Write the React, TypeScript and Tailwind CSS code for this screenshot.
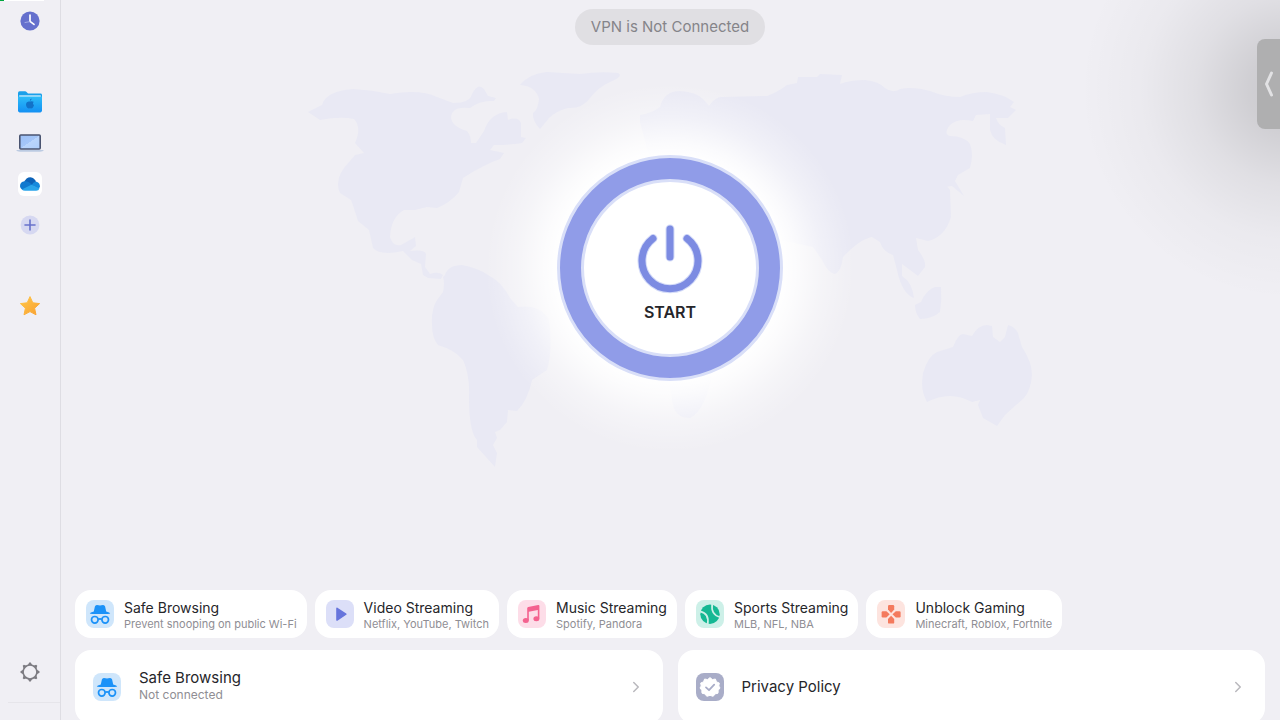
import { useState } from "react";
import type { ReactNode } from "react";
import { ChevronRight } from "lucide-react";

type Shortcut = {
  title: string;
  detail: string;
  tile: string;
  icon: ReactNode;
};

function SpyIcon() {
  return (
    <svg viewBox="0 0 28 28" className="size-7" fill="none" aria-hidden="true">
      <path
        d="M7.8 11.6 L8.9 6.6 Q9.4 5 11 5.1 Q12.6 5.5 14 5.5 Q15.4 5.5 17 5.1 Q18.6 5 19.1 6.6 L20.2 11.6 Q24 12.6 24.2 13.4 Q24 14 14 14 Q4 14 3.8 13.4 Q4 12.6 7.8 11.6 Z"
        fill="#1b92f8"
      />
      <circle cx="8.8" cy="19.8" r="3.3" stroke="#1b92f8" strokeWidth="1.7" />
      <circle cx="19.2" cy="19.8" r="3.3" stroke="#1b92f8" strokeWidth="1.7" />
      <path d="M12 19.4 Q14 18.4 16 19.4" stroke="#1b92f8" strokeWidth="1.7" />
    </svg>
  );
}

function PlayIcon() {
  return (
    <svg viewBox="0 0 28 28" className="size-7" aria-hidden="true">
      <path d="M11 8.4 L19.8 14.2 L11 20 Z" fill="#6674dc" stroke="#6674dc" strokeWidth="1.6" strokeLinejoin="round" />
    </svg>
  );
}

function MusicIcon() {
  return (
    <svg viewBox="0 0 28 28" className="size-7" fill="#f4628f" aria-hidden="true">
      <path d="M9.2 8.2 Q9.2 7.2 10.2 6.9 L20.2 5.1 Q21.4 4.9 21.4 6 L21.4 18.5 L19.8 18.5 L19.8 10 L10.8 11.7 L10.8 20.5 L9.2 20.5 Z" />
      <ellipse cx="7.8" cy="20.6" rx="3" ry="2.5" />
      <ellipse cx="18.4" cy="18.7" rx="3" ry="2.5" />
    </svg>
  );
}

function BallIcon() {
  return (
    <svg viewBox="0 0 28 28" className="size-7" fill="none" aria-hidden="true">
      <circle cx="14" cy="14.2" r="9.7" fill="#14b893" />
      <path d="M4 11.4 Q13.6 13.4 11.6 24.4" stroke="#cdf0e8" strokeWidth="1.7" />
      <path d="M16.2 4 Q14.6 14.6 24 17.2" stroke="#cdf0e8" strokeWidth="1.7" />
    </svg>
  );
}

function GamepadIcon() {
  return (
    <svg viewBox="0 0 28 28" className="size-7" fill="#f47a5d" aria-hidden="true">
      <path d="M11 6.2 Q11 5 12.2 5 L16 5 Q17.2 5 17.2 6.2 L17.2 9.6 L14.1 12.9 L11 9.6 Z" />
      <path d="M11 22.4 Q11 23.6 12.2 23.6 L16 23.6 Q17.2 23.6 17.2 22.4 L17.2 19 L14.1 15.7 L11 19 Z" />
      <path d="M5.8 11.2 Q4.6 11.2 4.6 12.4 L4.6 16.2 Q4.6 17.4 5.8 17.4 L9.4 17.4 L12.7 14.3 L9.4 11.2 Z" />
      <path d="M22.4 11.2 Q23.6 11.2 23.6 12.4 L23.6 16.2 Q23.6 17.4 22.4 17.4 L18.8 17.4 L15.5 14.3 L18.8 11.2 Z" />
    </svg>
  );
}

function BadgeIcon() {
  return (
    <svg viewBox="0 0 28 28" className="size-7" fill="none" aria-hidden="true">
      <path
        d="M14 4.6 L16.4 6.6 L19.4 6 L20.5 8.9 L23.3 10 L22.8 13 L24 15 L22.2 17.2 L22 20.2 L19.1 20.9 L17.2 23.3 L14 22.4 L10.8 23.3 L8.9 20.9 L6 20.2 L5.8 17.2 L4 15 L5.2 13 L4.7 10 L7.5 8.9 L8.6 6 L11.6 6.6 Z"
        fill="#fff"
        stroke="#fff"
        strokeLinejoin="round"
      />
      <path d="M10 14.4 L13 17.2 L18.2 11.6" stroke="#a9adc8" strokeWidth="1.8" strokeLinecap="round" strokeLinejoin="round" />
    </svg>
  );
}

const SHORTCUTS: Shortcut[] = [
  { title: "Safe Browsing",    detail: "Prevent snooping on public Wi-Fi", tile: "bg-[#cfe6fb]", icon: <SpyIcon /> },
  { title: "Video Streaming",  detail: "Netflix, YouTube, Twitch",         tile: "bg-[#dcdff8]", icon: <PlayIcon /> },
  { title: "Music Streaming",  detail: "Spotify, Pandora",                 tile: "bg-[#fddde8]", icon: <MusicIcon /> },
  { title: "Sports Streaming", detail: "MLB, NFL, NBA",                    tile: "bg-[#cdf0e8]", icon: <BallIcon /> },
  { title: "Unblock Gaming",   detail: "Minecraft, Roblox, Fortnite",      tile: "bg-[#fde4df]", icon: <GamepadIcon /> },
];

function ClockIcon() {
  return (
    <svg viewBox="0 0 20 20" className="size-5" aria-hidden="true">
      <circle cx="10" cy="10" r="9.6" fill="#6570cd" />
      <path d="M10 4 V10.4 L14 13.4" fill="none" stroke="#fff" strokeWidth="1.7" strokeLinecap="round" strokeLinejoin="round" />
      <path d="M10 10.6 L4.6 11.6" stroke="#b0b7ec" strokeWidth="0.8" />
    </svg>
  );
}

function FolderIcon() {
  return (
    <svg viewBox="0 0 26 24" className="h-6 w-[26px]" aria-hidden="true">
      <defs>
        <linearGradient id="folder" x1="0" y1="0" x2="0" y2="1">
          <stop offset="0" stopColor="#2cbcf8" />
          <stop offset="1" stopColor="#1490f3" />
        </linearGradient>
      </defs>
      <path d="M1 3 Q1 1.2 2.6 1.2 L8 1.2 Q9 1.2 9.8 2.2 L11 3.6 L23.4 3.6 Q25 3.6 25 5 L25 9 L1 9 Z" fill="#1aa0ea" />
      <rect x="2.2" y="5.4" width="21.6" height="4" fill="#e4f5fe" />
      <path d="M1 6.6 H25 V20.6 Q25 22.4 23.4 22.4 H2.6 Q1 22.4 1 20.6 Z" fill="url(#folder)" />
      <path
        d="M13 11.6 Q14.8 10.8 16.6 11.8 Q15 13.6 17 15.6 Q15.8 18.6 14.2 18.6 Q13 18 11.8 18.6 Q9 17.6 9 14 Q9.4 10.8 13 11.6 Z M12.8 10.9 Q12.8 9 14.6 8.6 Q14.8 10.6 12.8 10.9 Z"
        fill="#1272c8"
      />
    </svg>
  );
}

function LaptopIcon() {
  return (
    <svg viewBox="0 0 28 20" className="h-5 w-7" aria-hidden="true">
      <defs>
        <linearGradient id="screen" x1="0" y1="0" x2="1" y2="1">
          <stop offset="0" stopColor="#9cc0f6" />
          <stop offset="0.5" stopColor="#a5c6f8" />
          <stop offset="0.5" stopColor="#bad5fb" />
          <stop offset="1" stopColor="#aecdfa" />
        </linearGradient>
      </defs>
      <rect x="3.8" y="2" width="20.4" height="14" rx="1" fill="url(#screen)" stroke="#4a5470" strokeWidth="1.6" />
      <path d="M0 17 H28 Q27 18.8 24 18.8 H4 Q1 18.8 0 17 Z" fill="#bccbe2" />
    </svg>
  );
}

function CloudIcon() {
  return (
    <svg viewBox="0 0 24 24" className="size-6 rounded-md bg-white" aria-hidden="true">
      <path d="M6 10.6 Q8 5.2 12.4 5.2 Q16.6 5.4 18.2 10.4 L13 15 Z" fill="#0c62b8" />
      <path d="M6.6 9.2 Q2 9.6 2 14.2 Q2.2 16.8 4.4 18 L15 13.4 Q10.4 8.8 6.6 9.2 Z" fill="#1079cf" />
      <path d="M13.6 13 Q16 9 18.6 9.8 Q22 10.8 22 15 L20 17 Z" fill="#1589dc" />
      <path d="M3.8 17.6 L13.4 12.8 L21.6 16.6 Q20.6 18.8 18.2 18.8 H7 Q5 18.8 3.8 17.6 Z" fill="#29a4ea" />
    </svg>
  );
}

function AddIcon() {
  return (
    <svg viewBox="0 0 20 20" className="size-5" aria-hidden="true">
      <circle cx="10" cy="10" r="9.4" fill="#d6d8f1" />
      <path d="M10 5 V15 M5 10 H15" stroke="#6872cb" strokeWidth="1.6" strokeLinecap="round" />
    </svg>
  );
}

function StarIcon() {
  return (
    <svg viewBox="0 0 22 22" className="size-[22px]" aria-hidden="true">
      <defs>
        <linearGradient id="star" x1="0" y1="0" x2="1" y2="1">
          <stop offset="0" stopColor="#ffc84a" />
          <stop offset="1" stopColor="#f9a030" />
        </linearGradient>
      </defs>
      <path
        d="M11 1.6 L13.8 7.8 L20.6 8.6 L15.6 13.2 L17 19.8 L11 16.6 L5 19.8 L6.4 13.2 L1.4 8.6 L8.2 7.8 Z"
        fill="url(#star)"
        stroke="url(#star)"
        strokeLinejoin="round"
      />
    </svg>
  );
}

function GearIcon() {
  return (
    <svg viewBox="0 0 20 20" className="size-5" fill="none" aria-hidden="true">
      <circle cx="10" cy="10" r="6.9" stroke="#7d7c82" strokeWidth="1.5" />
      {[0, 45, 90, 135, 180, 225, 270, 315].map(angle => (
        <path key={angle} d="M7.8 3.2 L9.2 0.5 H10.8 L12.2 3.2 Z" fill="#7d7c82" transform={`rotate(${angle} 10 10)`} />
      ))}
    </svg>
  );
}

function SideButton({ label, className = "", children }: { label: string; className?: string; children: ReactNode }) {
  return (
    <button type="button" aria-label={label} className={`flex h-[41px] w-full shrink-0 items-center justify-center ${className}`}>
      {children}
    </button>
  );
}

function Sidebar() {
  return (
    <nav className="flex w-[61px] shrink-0 flex-col border-r border-[#dedde3]">
      <SideButton label="Recents"><ClockIcon /></SideButton>
      <SideButton label="Files" className="mt-10"><FolderIcon /></SideButton>
      <SideButton label="Computer"><LaptopIcon /></SideButton>
      <SideButton label="OneDrive"><CloudIcon /></SideButton>
      <SideButton label="Add location"><AddIcon /></SideButton>
      <SideButton label="Favorites" className="mt-10"><StarIcon /></SideButton>
      <SideButton label="Settings" className="mt-auto"><GearIcon /></SideButton>
      <div className="mt-2.5 mb-[17px] ml-2 h-px shrink-0 bg-[#e6e5ea]" />
    </nav>
  );
}

function WorldMap() {
  return (
    <svg viewBox="290 68 760 400" className="w-[760px] max-w-full" fill="#e9e9f4" aria-hidden="true">
      {/* North and Central America */}
      <path d="M308 112 L322 105 Q326 91 353 89 Q372 90 390 94 Q420 89 437 97 L453 103 Q470 103 472 94 Q478 82 484 89 L488 96 L496 98 L494 101 Q480 100 470 108 Q452 106 451 117 Q451 126 467 131 Q471 136 471 143 L476 143 Q480 137 484 131 Q490 113 507 112 L508 120 Q518 116 521 123 L521 137 L526 138 L522 143 Q510 145 494 145 L490 150 L504 153 L500 159 Q485 164 463 178 L459 192 Q450 203 437 208 L427 207 L415 210 L404 210 Q391 217 390 237 Q393 247 401 245 Q410 240 415 237 L416 246 L410 251 Q425 249 426 254 L425 267 L430 274 Q438 271 443 275 L441 279 L428 278 L423 275 L421 264 L412 260 L403 251 Q380 256 373 248 L369 230 L358 221 Q354 208 351 200 L340 193 Q333 178 350 161 L355 155 L364 153 L355 143 Q362 128 354 119 Q340 116 320 120 Z" />
      {/* South America */}
      <path d="M445 275 Q448 265 462 265 Q478 268 488 275 Q502 282 510 298 L518 307 Q540 304 549 320 Q553 350 547 370 L532 380 Q528 400 517 411 L508 410 L507 422 L500 430 L495 432 L497 438 L493 445 L497 453 L495 467 L477 447 L477 440 Q469 432 469 397 Q470 375 463 360 Q455 350 438 345 Q432 338 432 325 Q431 310 437 300 L443 292 Q445 283 443 277 Z" />
      {/* Greenland */}
      <path d="M520 85 Q528 74 547 72 L580 74 Q600 71 618 73 Q624 76 610 82 Q597 88 590 98 Q582 109 568 108 Q556 111 549 118 L540 129 Q532 120 533 113 Q538 110 539 99 Q536 86 520 85 Z" />
      {/* Europe and Asia */}
      <path d="M640 122 L640 115 Q652 113 660 107 Q664 91 680 91 Q696 92 703 99 L709 106 Q715 97 722 97 L767 96 Q778 92 787 85 L797 83 L798 77 L817 77 L820 74 L842 75 L840 84 Q850 80 865 80 Q878 81 885 88 Q893 94 900 89 Q913 86 930 91 Q945 97 960 97 Q972 92 987 92 Q1003 94 1014 102 L1010 107 L1016 110 L1008 118 L996 118 Q998 125 1005 128 L1006 145 Q992 140 990 130 L990 114 L976 115 L973 121 Q958 118 950 125 Q943 134 950 136 Q964 136 970 144 Q974 154 970 168 L958 175 L955 181 L964 196 L952 186 L937 188 L931 183 L940 178 L950 190 L951 217 Q945 237 928 241 L916 238 L918 250 Q926 260 925 267 L918 276 L902 264 L902 276 Q912 282 914 298 Q902 294 897 270 L893 255 Q883 252 880 242 L872 237 Q860 239 843 257 Q841 272 835 274 Q828 273 822 260 L813 247 L780 240 L680 200 L640 200 L650 160 Z" />
      <path d="M915 305 L921 302 Q926 290 935 287 L941 287 Q942 300 940 312 Q932 319 920 319 Q915 313 915 305 Z" />
      {/* Africa */}
      <path d="M600 230 Q660 190 720 220 L760 290 Q735 330 713 370 Q706 410 690 418 Q676 418 673 405 L660 330 Q600 310 600 230 Z" />
      {/* Australia */}
      <path d="M922 383 L923 373 Q928 356 937 352 L953 347 Q958 334 963 334 L972 336 Q978 325 987 325 L992 326 L993 337 L1000 342 L1005 337 L1008 325 Q1018 328 1019 337 L1022 347 Q1032 362 1032 375 Q1031 390 1024 398 L1005 415 L997 426 L983 418 L978 405 L980 400 L972 402 Q950 390 927 402 Q922 393 922 383 Z" />
    </svg>
  );
}

function PowerIcon() {
  return (
    <svg viewBox="0 0 70 72" className="h-[72px] w-[70px]" fill="none" strokeLinecap="round" aria-hidden="true">
      <path d="M18 14.5 A28 28 0 1 0 52 14.5 M35 5 V33" stroke="#d5dcf8" strokeWidth="9" />
      <path d="M18 14.5 A28 28 0 1 0 52 14.5 M35 5 V33" stroke="#7c8be2" strokeWidth="7" />
    </svg>
  );
}

export default function App() {
  const [connected, setConnected] = useState(false);

  return (
    <div className="relative flex h-screen overflow-hidden bg-[#f0eff4] font-[Inter,sans-serif] text-[#26262a]">
      {/* Page load bar */}
      <div className="absolute top-0 left-0 h-px w-11 bg-white">
        <div className="h-full w-1 bg-green-600" />
      </div>

      <Sidebar />

      <main className="flex min-w-0 flex-1 flex-col pt-[9px] pr-px">
        <p className="self-center rounded-full bg-[#e0dfe3] px-4 py-1.5 text-[15px] leading-6 text-[#858489]">
          {connected ? "VPN is Connected" : "VPN is Not Connected"}
        </p>

        {/* Map, glow and power button share one cell */}
        <div className="mt-[23px] grid place-items-center *:col-start-1 *:row-start-1">
          <WorldMap />
          <div className="size-[370px] rounded-full bg-[radial-gradient(closest-side,#fff_60%,#ffffffcc_68%,#ffffff5c_82%,#ffffff1f_93%,#ffffff00_100%)]" />
          <button
            type="button"
            onClick={() => setConnected(v => !v)}
            className="size-[226px] rounded-full border-3 border-[#d9dff8] bg-[#909ce8] p-[21px]"
          >
            <span className="flex size-full flex-col items-center justify-center gap-1 rounded-full border-3 border-[#d9dff8] bg-white pt-3">
              <PowerIcon />
              <span className="text-base font-semibold">{connected ? "STOP" : "START"}</span>
            </span>
          </button>
        </div>

        <div className="-mb-1 mt-auto space-y-3 px-3.5">
          <div className="flex gap-2">
            {SHORTCUTS.map(s => (
              <button
                key={s.title}
                type="button"
                className="flex h-12 shrink-0 items-center gap-2.5 rounded-2xl bg-white pr-2.5 pl-[11px] text-left"
              >
                <span className={`rounded-lg ${s.tile}`}>{s.icon}</span>
                <span className="pt-0.5 whitespace-nowrap">
                  <span className="block text-sm leading-[18px]">{s.title}</span>
                  <span className="block text-[11px] leading-[14px] text-[#8f8e94]">{s.detail}</span>
                </span>
              </button>
            ))}
          </div>

          <div className="grid grid-cols-2 gap-[15px]">
            <button type="button" className="flex h-[74px] items-center gap-[18px] rounded-2xl bg-white px-[18px] text-left">
              <span className="rounded-lg bg-[#cfe6fb]"><SpyIcon /></span>
              <span className="flex-1 pb-1">
                <span className="block text-[15px] leading-5">Safe Browsing</span>
                <span className="block text-xs leading-[14px] text-[#8f8e94]">Not connected</span>
              </span>
              <ChevronRight size={18} strokeWidth={2} className="text-[#b9b8bd]" />
            </button>
            <button type="button" className="flex h-[74px] items-center gap-[18px] rounded-2xl bg-white px-[18px] text-left">
              <span className="rounded-lg bg-[#a9adc8]"><BadgeIcon /></span>
              <span className="flex-1 text-[15px] leading-5">Privacy Policy</span>
              <ChevronRight size={18} strokeWidth={2} className="text-[#b9b8bd]" />
            </button>
          </div>
        </div>
      </main>

      {/* Slide-over handle */}
      <div className="pointer-events-none absolute -top-[120px] -right-[220px] size-[420px] rounded-full bg-[radial-gradient(closest-side,#0000002a_0%,#00000022_20%,#00000011_45%,#00000006_70%,#00000000_100%)]" />
      <button
        type="button"
        aria-label="Show side panel"
        className="absolute top-[39px] right-0 flex h-[90px] w-[23px] items-center justify-center rounded-l-lg bg-[#afafb0]"
      >
        <svg viewBox="0 0 10 28" className="h-7 w-2.5" fill="none" aria-hidden="true">
          <path d="M7.5 3 L2.5 14 L7.5 25" stroke="#e2e2e4" strokeWidth="3" strokeLinecap="round" strokeLinejoin="round" />
        </svg>
      </button>
    </div>
  );
}
